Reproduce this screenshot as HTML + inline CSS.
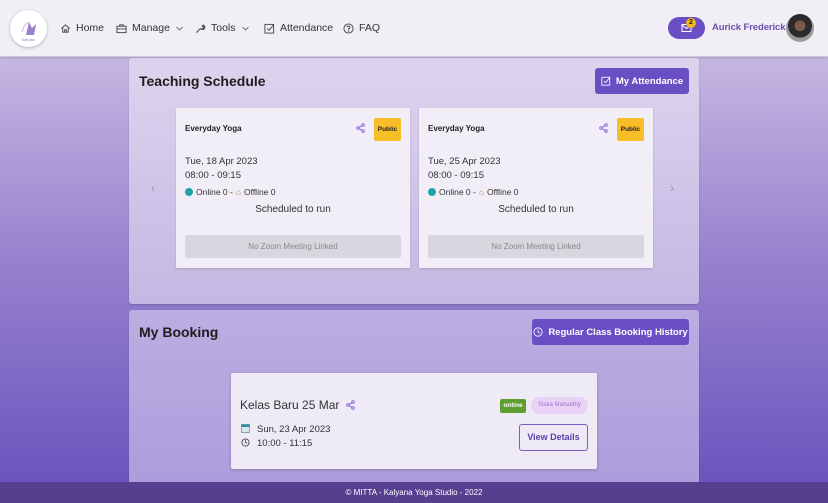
<!DOCTYPE html>
<html><head><meta charset="utf-8"><style>
*{box-sizing:border-box;margin:0;padding:0}
body{width:828px;height:503px;overflow:hidden;font-family:"Liberation Sans",sans-serif;color:#222;position:relative;
background:linear-gradient(#d2c7e9 0px,#c2b3e0 70px,#9a84cf 250px,#6a55be 482px);}
.nav{position:absolute;left:0;top:0;width:828px;height:57px;background:#f1eef6;border-bottom:1px solid #cfc6e0;box-shadow:0 1px 3px rgba(0,0,0,.15)}
.logo{position:absolute;left:10px;top:10px;width:37px;height:37px;border-radius:50%;background:#fff;box-shadow:0 1px 3px rgba(0,0,0,.25)}
.ni{position:absolute;top:22px;font-size:10.5px;color:#333;display:flex;align-items:center;gap:5px;white-space:nowrap}
.ni svg{width:11px;height:11px}
.mail{position:absolute;left:668px;top:17px;width:37px;height:22px;border-radius:11px;background:#6a4fc4}
.badge{position:absolute;left:686px;top:18px;width:10px;height:10px;border-radius:50%;background:#f5b51a;font-size:7px;text-align:center;line-height:10px;color:#222;font-weight:bold}
.uname{position:absolute;left:712px;top:22px;font-size:9.5px;color:#6a4fb0;font-weight:bold;white-space:nowrap;letter-spacing:-0.1px}
.av{position:absolute;left:786px;top:14px;width:28px;height:28px;border-radius:50%;background:radial-gradient(circle at 50% 42%,#7a5a48 0 25%,#2a2a2a 26% 55%,#9a9a9a 56% 80%,#444 81%)}
.panel{position:absolute;left:129px;width:570px;background:rgba(240,236,248,.55);border-radius:3px;box-shadow:0 1px 2px rgba(0,0,0,.15)}
h2{position:absolute;left:10px;font-size:14px;font-weight:bold;color:#1e1e1e}
.btn{position:absolute;background:#6a4fc4;color:#fff;font-size:9.5px;font-weight:bold;border-radius:3px;display:flex;align-items:center;justify-content:center;gap:5px;white-space:nowrap}
.card{position:absolute;top:108px;width:234px;height:160px;background:#f1eef7;box-shadow:0 1px 2px rgba(0,0,0,.15)}
.card .t{position:absolute;left:9px;top:16px;font-size:8px;font-weight:bold}
.pub{position:absolute;left:198px;top:10px;width:27px;height:23px;background:#f7be28;border-radius:2px;font-size:6.5px;font-weight:bold;text-align:center;line-height:23px}
.sh{position:absolute;left:180px;top:15px}
.d{position:absolute;left:9px;font-size:9.5px;color:#333;white-space:nowrap}
.st{position:absolute;left:0;width:234px;top:96px;text-align:center;font-size:10px;color:#333}
.nz{position:absolute;left:9px;top:127px;width:216px;height:23px;background:#d9d6df;border-radius:2px;font-size:8px;color:#888;text-align:center;line-height:23px}
.arr{position:absolute;top:181px;color:#999;font-size:12px}
.bk{position:absolute;left:231px;top:373px;width:366px;height:96px;background:#eeeaf6;border-radius:2px;box-shadow:0 1px 3px rgba(0,0,0,.2)}
.foot{position:absolute;left:0;top:482px;width:828px;height:21px;background:#563f8f;color:#fff;font-size:8px;text-align:center;line-height:21px}
</style></head><body>
<div class="nav">
<div class="logo"><svg width="37" height="37" viewBox="0 0 37 37"><path d="M16 25 L19 12 L22 18 L26 14 L24 25Z" fill="#9b80cc"/><path d="M12 22 Q14 14 19 12" stroke="#c9b8e6" fill="none"/><text x="18.5" y="31" font-size="4" text-anchor="middle" fill="#8a70bb" font-family="Liberation Serif">kalyana</text></svg></div>
<div class="ni" style="left:60px"><svg viewBox="0 0 12 12" fill="none" stroke="#444"><path d="M1.5 6 6 2l4.5 4M3 5v5h6V5M5 10V7.5h2V10"/></svg>Home</div>
<div class="ni" style="left:116px"><svg viewBox="0 0 12 12" fill="none" stroke="#444"><rect x="1" y="3.5" width="10" height="7"/><path d="M4 3.5V2h4v1.5M1 6.5h10"/></svg>Manage <svg viewBox="0 0 12 12" style="width:9px;height:9px" fill="none" stroke="#444"><path d="M2 4l4 4 4-4"/></svg></div>
<div class="ni" style="left:195px"><svg viewBox="0 0 12 12" fill="none" stroke="#444"><path d="M1.5 10.5 6 6M6 6a2.5 2.5 0 1 0 3-4l-1.2 1.5 1 1L10.3 3.2A2.5 2.5 0 0 1 6 6"/></svg>Tools <svg viewBox="0 0 12 12" style="width:9px;height:9px" fill="none" stroke="#444"><path d="M2 4l4 4 4-4"/></svg></div>
<div class="ni" style="left:264px"><svg viewBox="0 0 12 12" fill="none" stroke="#444"><rect x="1" y="1.5" width="9.5" height="9.5"/><path d="M3.5 6l2 2 5-6"/></svg>Attendance</div>
<div class="ni" style="left:343px"><svg viewBox="0 0 12 12" fill="none" stroke="#444"><circle cx="6" cy="6" r="5"/><path d="M4.5 4.6a1.5 1.5 0 1 1 1.5 1.6v1"/><circle cx="6" cy="8.7" r=".3"/></svg>FAQ</div>
<div class="mail"><svg style="position:absolute;left:13px;top:6px" width="11" height="10" viewBox="0 0 11 10" fill="none" stroke="#fff"><rect x="1" y="1.5" width="9" height="7"/><path d="M1 2l4.5 3.5L10 2"/></svg></div>
<div class="badge">2</div>
<div class="uname">Aurick Frederick</div>
<div class="av"></div>
</div>

<div class="panel" style="top:58px;height:246px">
<h2 style="top:15px">Teaching Schedule</h2>
<div class="btn" style="left:466px;top:10px;width:94px;height:26px"><svg width="10" height="10" viewBox="0 0 12 12" fill="none" stroke="#fff"><rect x="1" y="1.5" width="9.5" height="9.5"/><path d="M3.5 6l2 2 5-6"/></svg>My Attendance</div>
</div>
<div class="arr" style="left:151px">&#8249;</div>
<div class="arr" style="left:670px">&#8250;</div>

<div class="card" style="left:176px">
<div class="t">Everyday Yoga</div>
<svg class="sh" width="9" height="10" viewBox="0 0 9 10" fill="none" stroke="#8a6ad0"><circle cx="7" cy="2" r="1.3"/><circle cx="2" cy="5" r="1.3"/><circle cx="7" cy="8" r="1.3"/><path d="M3.2 4.4 5.8 2.7M3.2 5.6 5.8 7.3"/></svg>
<div class="pub">Public</div>
<div class="d" style="top:48px">Tue, 18 Apr 2023</div>
<div class="d" style="top:62px">08:00 - 09:15</div>
<div class="d" style="top:79px;font-size:8.5px;display:flex;align-items:center;gap:3px"><span style="width:8px;height:8px;border-radius:50%;background:#21a0a8;display:inline-block"></span>Online 0 - <span style="color:#c08a40">&#8962;</span> Offline 0</div>
<div class="st">Scheduled to run</div>
<div class="nz">No Zoom Meeting Linked</div>
</div>
<div class="card" style="left:419px">
<div class="t">Everyday Yoga</div>
<svg class="sh" width="9" height="10" viewBox="0 0 9 10" fill="none" stroke="#8a6ad0"><circle cx="7" cy="2" r="1.3"/><circle cx="2" cy="5" r="1.3"/><circle cx="7" cy="8" r="1.3"/><path d="M3.2 4.4 5.8 2.7M3.2 5.6 5.8 7.3"/></svg>
<div class="pub">Public</div>
<div class="d" style="top:48px">Tue, 25 Apr 2023</div>
<div class="d" style="top:62px">08:00 - 09:15</div>
<div class="d" style="top:79px;font-size:8.5px;display:flex;align-items:center;gap:3px"><span style="width:8px;height:8px;border-radius:50%;background:#21a0a8;display:inline-block"></span>Online 0 - <span style="color:#c08a40">&#8962;</span> Offline 0</div>
<div class="st">Scheduled to run</div>
<div class="nz">No Zoom Meeting Linked</div>
</div>

<div class="panel" style="top:310px;height:180px;background:rgba(225,218,244,.55)">
<h2 style="top:14px">My Booking</h2>
<div class="btn" style="left:403px;top:9px;width:157px;height:26px"><svg width="10" height="10" viewBox="0 0 12 12" fill="none" stroke="#fff"><circle cx="6" cy="6" r="5"/><path d="M6 3v3l2 1.5"/></svg>Regular Class Booking History</div>
</div>
<div class="bk">
<div style="position:absolute;left:9px;top:25px;font-size:12px;color:#333">Kelas Baru 25 Mar</div>
<svg style="position:absolute;left:115px;top:27px" width="9" height="10" viewBox="0 0 9 10" fill="none" stroke="#8a6ad0"><circle cx="7" cy="2" r="1.3"/><circle cx="2" cy="5" r="1.3"/><circle cx="7" cy="8" r="1.3"/><path d="M3.2 4.4 5.8 2.7M3.2 5.6 5.8 7.3"/></svg>
<div style="position:absolute;left:269px;top:26px;width:26px;height:14px;background:#5e9e30;border-radius:2px;color:#fff;font-size:6.5px;font-weight:bold;text-align:center;line-height:14px">online</div>
<div style="position:absolute;left:300px;top:24px;width:57px;height:17px;background:#e8d3f7;border-radius:9px;color:#a070d0;font-size:6px;text-align:center;line-height:17px;white-space:nowrap">Siska Marsudhy</div>
<svg style="position:absolute;left:10px;top:51px" width="9" height="9" viewBox="0 0 9 9"><rect x=".5" y=".5" width="8" height="8" fill="#dfe6ee" stroke="#8aa"/><rect x=".5" y=".5" width="8" height="2.5" fill="#2a8fa0"/></svg>
<div style="position:absolute;left:26px;top:51px;font-size:9.5px;color:#333">Sun, 23 Apr 2023</div>
<svg style="position:absolute;left:10px;top:65px" width="9" height="9" viewBox="0 0 10 10" fill="none" stroke="#444"><circle cx="5" cy="5" r="4"/><path d="M5 2.5V5l1.8 1"/></svg>
<div style="position:absolute;left:26px;top:65px;font-size:9.5px;color:#333">10:00 - 11:15</div>
<div style="position:absolute;left:288px;top:51px;width:69px;height:27px;border:1px solid #7a5cc4;border-radius:3px;color:#5a40a8;font-size:9px;font-weight:bold;text-align:center;line-height:25px">View Details</div>
</div>
<div class="foot">© MITTA - Kalyana Yoga Studio - 2022</div>
</body></html>
